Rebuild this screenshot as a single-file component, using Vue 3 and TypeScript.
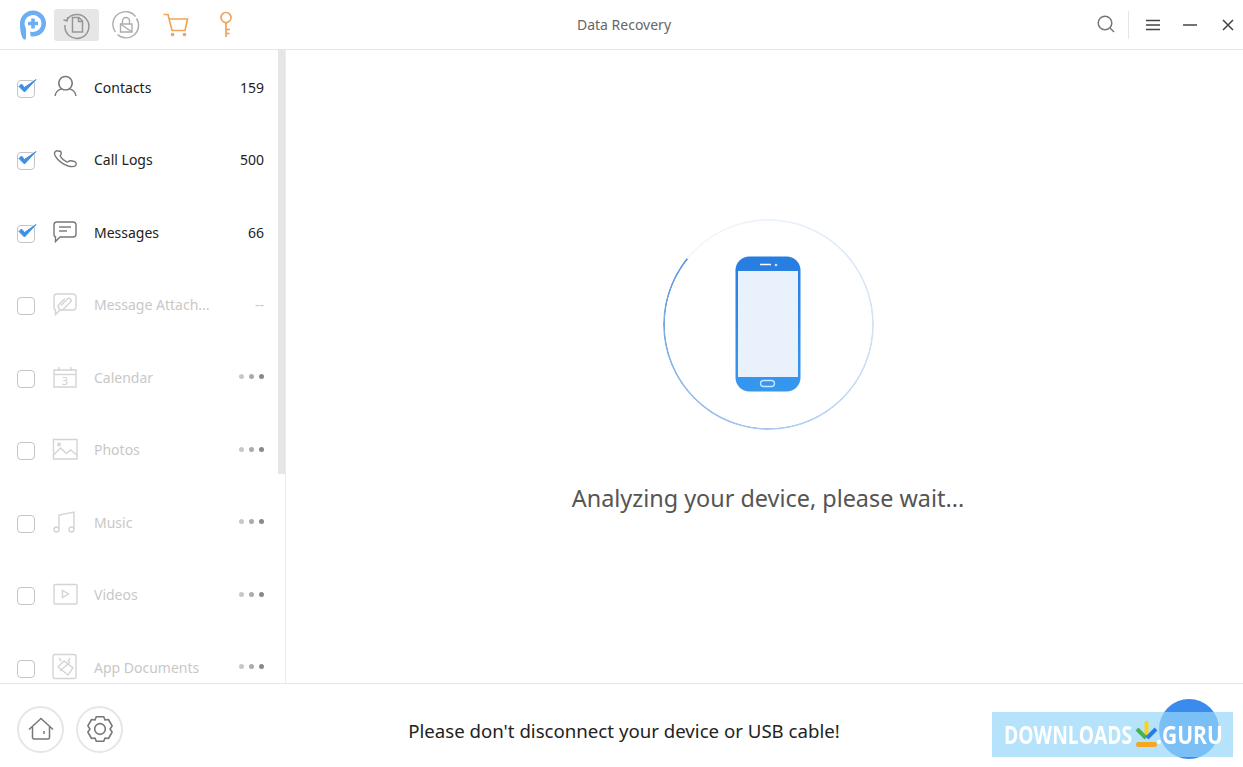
<script setup lang="ts">
interface Row {
  label: string
  count?: string
  checked: boolean
  busy?: boolean
  paths: string[]
  glyph?: string
}

const rows: Row[] = [
  {
    label: 'Contacts',
    count: '159',
    checked: true,
    paths: ['M16.5 4.5a6.7 6.7 0 1 1-.01 0z', 'M6 24c.8-4.6 3.6-6.6 7.2-7.4', 'M27 24c-.8-4.6-3.6-6.6-7.2-7.4']
  },
  {
    label: 'Call Logs',
    count: '500',
    checked: true,
    paths: ['M9.5 7.2C7 6 5 8 5.6 10.4c.5 1.8 1.5 3.2 2.8 4.6 3 3.2 6.6 5.800 10.800 7 2.700.7 5.800 1 7.400-.6 1.200-1.300.6-3-1-3.700-1.800-.8-3.800-1.300-5.300-.7-1 .4-1.500 1.300-2.600.9-2.500-1-5-3.400-6.300-5.500-.5-.9.3-1.500.7-2.300.4-1 .2-1.900-.6-2.900z']
  },
  {
    label: 'Messages',
    count: '66',
    checked: true,
    paths: ['M8 5h16a3 3 0 0 1 3 3v9a3 3 0 0 1-3 3H11l-4.500 4.500V20A2.500 2.500 0 0 1 5 17.500V8a3 3 0 0 1 3-3z', 'M10 10h12', 'M10 14h8']
  },
  {
    label: 'Message Attach...',
    count: '--',
    checked: false,
    paths: ['M8 5h16a3 3 0 0 1 3 3v10a3 3 0 0 1-3 3H11l-4.500 4.500V21A2.500 2.500 0 0 1 5 18.500V8a3 3 0 0 1 3-3z', 'M12 16.500l6.500-6.500a2 2 0 0 1 3 3l-7 7a3.200 3.200 0 0 1-4.500-4.500l6-6']
  },
  {
    label: 'Calendar',
    checked: false,
    busy: true,
    glyph: '3',
    paths: ['M5 8h22v17H5z', 'M5 12.500h22', 'M10 5v4', 'M22 5v4']
  },
  {
    label: 'Photos',
    checked: false,
    busy: true,
    paths: ['M4.500 5.500h23.500v19.500H4.500z', 'M4.500 21l7-7 6 5.500 4-3.500 6.500 5', 'M9 9.500h2v2H9z']
  },
  {
    label: 'Music',
    checked: false,
    busy: true,
    paths: ['M10 22V8l15-3v17', 'M10 22.500a2.500 2.500 0 1 1-5 0a2.500 2.500 0 1 1 5 0z', 'M25 22.500a2.500 2.500 0 1 1-5 0a2.500 2.500 0 1 1 5 0z']
  },
  {
    label: 'Videos',
    checked: false,
    busy: true,
    paths: ['M6 5.500h21a1 1 0 0 1 1 1v17.500a1 1 0 0 1-1 1H6a1 1 0 0 1-1-1V6.500a1 1 0 0 1 1-1z', 'M13.500 11.500v7l6-3.500z']
  },
  {
    label: 'App Documents',
    checked: false,
    busy: true,
    paths: ['M6 2.500h19a2 2 0 0 1 2 2v20a2 2 0 0 1-2 2H6a2 2 0 0 1-2-2v-20a2 2 0 0 1 2-2z', 'M9 15l6-6 9 7-5 7z', 'M11 19l10-9', 'M12 9l-2-3', 'M19 10l2-4']
  }
]
</script>

<template>
  <div class="app">
    <header class="top">
      <div class="tabs">
        <svg class="logo" width="30" height="32" viewBox="0 0 30 32">
          <path fill="#6daef3" d="M2 14.500a13 13 0 1 1 13 13c-1 0-1.500-.1-2.300-.3l-.7-4.700c1 .4 2 .5 3 .5a8.500 8.500 0 1 0-7.500-4.500l.5 1v9.500c0 1.300-1 2-2.200 1.300C3.500 28.500 2 22.500 2 14.500z" />
          <path fill="#6daef3" d="M13.200 9.500h3.600v3.200H20v3.600h-3.200v3.200h-3.600v-3.200H10v-3.600h3.200z" />
        </svg>
        <div class="tab active">
          <svg width="32" height="32" viewBox="0 0 32 32" fill="none" stroke="#969696" stroke-width="1.500">
            <path d="M5.500 11.500A12 12 0 1 1 4 16" />
            <path d="M2.500 11l3.500.8.800-3.600" />
            <path d="M11.500 8.500h6.500l3.500 3.500v11h-10z" />
            <path d="M17.500 8.500v4h4" />
          </svg>
        </div>
        <div class="tab">
          <svg width="32" height="32" viewBox="0 0 32 32" fill="none" stroke="#adadad" stroke-width="1.400">
            <path d="M5.500 23A12.500 12.500 0 0 1 25.500 7.500" />
            <path d="M26.500 9.500A12.500 12.500 0 0 1 7.500 25.500" />
            <path d="M10.500 15h11.500v8H10.500z" />
            <path d="M12.500 15v-3a3.500 3.500 0 0 1 7 0v3" />
            <path d="M10.500 15l11.500 8" />
          </svg>
        </div>
        <div class="tab">
          <svg width="32" height="32" viewBox="0 0 32 32" fill="none" stroke="#f0a45c" stroke-width="1.700">
            <path d="M3.500 5.500h4.500l4 16h13l2.500-11.500H9" />
            <circle cx="12.500" cy="25.500" r="1" fill="#f0a45c" />
            <circle cx="24.500" cy="25.500" r="1" fill="#f0a45c" />
          </svg>
        </div>
        <div class="tab">
          <svg width="32" height="32" viewBox="0 0 32 32" fill="none" stroke="#f0a45c" stroke-width="1.700">
            <path d="M13 12.500A5 5 0 1 1 19 12.500" />
            <path d="M13 12.500l3 1.500 3-1.500" />
            <path d="M16 14V28" />
            <path d="M16 20.500h4" />
            <path d="M16 24.500h3.500" />
          </svg>
        </div>
      </div>
      <div class="title">Data Recovery</div>
      <div class="tools">
        <svg width="20" height="20" viewBox="0 0 20 20" fill="none" stroke="#777" stroke-width="1.500">
          <circle cx="9" cy="9" r="6.800" />
          <path d="M14 14l4 4" />
        </svg>
        <span class="sep"></span>
        <svg width="14" height="12" viewBox="0 0 14 12" stroke="#444" stroke-width="1.500">
          <path d="M0 1.500h14M0 6h14M0 10.500h14" />
        </svg>
        <svg width="14" height="12" viewBox="0 0 14 12" stroke="#444" stroke-width="1.500">
          <path d="M0 6h14" />
        </svg>
        <svg width="12" height="12" viewBox="0 0 12 12" stroke="#444" stroke-width="1.500">
          <path d="M1 1l10 10M11 1L1 11" />
        </svg>
      </div>
    </header>

    <div class="middle">
      <aside class="side">
        <div class="list">
          <div v-for="row in rows" :key="row.label" class="row" :class="{ off: !row.checked }">
            <span class="box">
              <svg v-if="row.checked" class="tick" width="24" height="20" viewBox="0 0 24 20" fill="none">
                <path d="M4 9.500l5.500 5.500L21 2.500l-11.500 8L6.500 7z" fill="#3f8fe6" stroke="#3f8fe6" stroke-width="1" stroke-linejoin="round" />
              </svg>
            </span>
            <svg class="ico" width="32" height="32" viewBox="0 0 32 32" fill="none">
              <path v-for="d in row.paths" :key="d" :d="d" />
              <text v-if="row.glyph" x="16" y="23" text-anchor="middle" class="glyph">{{ row.glyph }}</text>
            </svg>
            <span class="label">{{ row.label }}</span>
            <span v-if="row.busy" class="dots"><i></i><i></i><i></i></span>
            <span v-else class="count">{{ row.count }}</span>
          </div>
        </div>
        <div class="thumb"></div>
      </aside>

      <main class="main">
        <div class="ring">
          <div class="ring-line"></div>
          <svg class="phone" width="66" height="136" viewBox="0 0 66 136">
            <defs>
              <linearGradient id="body" x1="0" y1="0" x2="0" y2="1">
                <stop offset="0" stop-color="#277de0" />
                <stop offset="1" stop-color="#3598f0" />
              </linearGradient>
            </defs>
            <rect x="0.500" y="0.500" width="65" height="135" rx="14" fill="url(#body)" />
            <rect x="3" y="15" width="60" height="106" fill="#e9f2fc" />
            <path d="M25 8.500h11" stroke="#fff" stroke-width="1.500" />
            <circle cx="41" cy="9" r="1.300" fill="#cfe3f8" />
            <rect x="25.500" y="124.500" width="14" height="6" rx="3" fill="none" stroke="#cfe3f8" stroke-width="1.300" />
          </svg>
        </div>
        <p class="wait">Analyzing your device, please wait...</p>
      </main>
    </div>

    <footer class="foot">
      <div class="btns">
        <span class="round">
          <svg width="30" height="30" viewBox="0 0 30 30" fill="none" stroke="#777" stroke-width="1.500">
            <path d="M3 15.500L15 4.500l12 11" />
            <path d="M6.500 13v10.500a1.500 1.500 0 0 0 1.500 1.500h14a1.500 1.500 0 0 0 1.500-1.500V13" />
            <path d="M18 17v3" />
          </svg>
        </span>
        <span class="round">
          <svg width="32" height="32" viewBox="0 0 30 30" fill="none" stroke="#777" stroke-width="1.500" stroke-linejoin="round">
            <path d="M11.500 3.500h7l1.200 3 3.200-.4 3.500 6-2 2.900 2 2.900-3.500 6-3.200-.4-1.200 3h-7l-1.200-3-3.200.4-3.500-6 2-2.900-2-2.900 3.500-6 3.200.4z" />
            <circle cx="15" cy="15" r="5" />
          </svg>
        </span>
      </div>
      <div class="notice">Please don't disconnect your device or USB cable!</div>
      <div></div>
    </footer>

    <div class="fab"></div>
    <div class="mark">
      <span class="mark-text">DOWNLOADS</span>
      <svg width="26" height="30" viewBox="0 0 26 30">
        <rect x="3" y="22" width="21" height="5" rx="2.500" fill="#f5a623" />
        <path d="M13.500 1v16" stroke="#f7d417" stroke-width="4" />
        <path d="M4 9l9 9" stroke="#4caf50" stroke-width="4" />
        <path d="M23 9l-9 9" stroke="#2a7de1" stroke-width="4" />
      </svg>
      <span class="mark-text guru">.GURU</span>
    </div>
  </div>
</template>

<style scoped>
.app {
  position: relative;
  width: 1243px;
  height: 767px;
  overflow: hidden;
  background: #fff;
  display: flex;
  flex-direction: column;
  font-family: "Noto Sans", "Open Sans", sans-serif;
  color: #222;
}
.top {
  height: 50px;
  box-sizing: border-box;
  border-bottom: 1px solid #e6e6e6;
  display: grid;
  grid-template-columns: 1fr auto 1fr;
  align-items: center;
  padding-left: 5px;
}
.tabs {
  display: flex;
  align-items: center;
  padding-left: 13px;
}
.logo {
  margin-right: 6px;
}
.tab {
  width: 45px;
  height: 32px;
  margin-right: 4.700px;
  border-radius: 3px;
  display: flex;
  align-items: center;
  justify-content: center;
}
.tab.active {
  background: #e6e6e6;
}
.title {
  font-size: 14px;
  color: #666;
}
.tools {
  display: flex;
  align-items: center;
  justify-content: flex-end;
  padding-right: 9px;
}
.tools svg:nth-of-type(1) {
  margin-right: 12px;
  margin-top: -2px;
}
.tools svg:nth-of-type(2) {
  margin: 0 23px 0 17px;
}
.tools svg:nth-of-type(3) {
  margin-right: 25px;
}
.sep {
  width: 1px;
  height: 28px;
  background: #e4e4e4;
}
.middle {
  flex: 1;
  display: flex;
  min-height: 0;
}
.side {
  position: relative;
  width: 286px;
  flex: none;
  box-sizing: border-box;
  border-right: 1px solid #ececec;
  overflow: hidden;
}
.list {
  padding-top: 1.250px;
}
.thumb {
  position: absolute;
  top: 0;
  right: -1px;
  width: 8px;
  height: 424px;
  background: #e6e6e6;
}
.row {
  height: 72.500px;
  display: flex;
  align-items: center;
  padding: 0 21px 0 17px;
  box-sizing: border-box;
  width: 285px;
  font-size: 14px;
}
.box {
  position: relative;
  width: 18px;
  height: 18px;
  box-sizing: border-box;
  border: 1.500px solid #c4c4c4;
  border-radius: 4px;
  margin-top: 2px;
  flex: none;
}
.tick {
  position: absolute;
  left: -3px;
  top: -4px;
}
.ico {
  margin-left: 14px;
  flex: none;
  stroke: #777;
  stroke-width: 1.400;
}
.off .ico {
  stroke: #d4d4d4;
}
.glyph {
  font-size: 11px;
  fill: #d0d0d0;
  stroke: none;
}
.label {
  margin-left: 13px;
  flex: 1;
  white-space: nowrap;
  margin-top: -1px;
}
.count {
  margin-top: -1px;
}
.off .label,
.off .count {
  color: #c8c8c8;
}
.dots {
  display: flex;
  gap: 5px;
  margin-top: -2px;
}
.dots i {
  width: 5px;
  height: 5px;
  border-radius: 50%;
  background: #c8c8c8;
}
.dots i:nth-child(2) {
  background: #aaa;
}
.dots i:nth-child(3) {
  background: #888;
}
.main {
  flex: 1;
  display: flex;
  flex-direction: column;
  align-items: center;
  padding-top: 169px;
  padding-left: 7px;
}
.ring {
  position: relative;
  width: 211px;
  height: 211px;
  display: flex;
  align-items: center;
  justify-content: center;
}
.phone {
  margin: -2px 0 0 -1px;
}
.ring-line {
  position: absolute;
  inset: 0;
  border-radius: 50%;
  background: conic-gradient(from 309deg, #f5f8fb 0%, #eaf1fa 18%, #c8dcf6 48%, #93bbec 78%, #5c98e2 100%);
  -webkit-mask: radial-gradient(closest-side, transparent calc(100% - 2.200px), #000 calc(100% - 1.600px));
  mask: radial-gradient(closest-side, transparent calc(100% - 2.200px), #000 calc(100% - 1.600px));
}
.wait {
  margin: 51px 0 0;
  font-size: 23.400px;
  line-height: 34px;
  color: #555;
}
.foot {
  height: 84px;
  box-sizing: border-box;
  border-top: 1px solid #e6e6e6;
  display: grid;
  grid-template-columns: 1fr auto 1fr;
  align-items: center;
  padding: 7px 0 0 5px;
}
.btns {
  display: flex;
  gap: 12px;
  padding-left: 12px;
}
.round {
  width: 47px;
  height: 47px;
  box-sizing: border-box;
  border: 2px solid #e6e6e6;
  border-radius: 50%;
  display: flex;
  align-items: center;
  justify-content: center;
}
.notice {
  font-size: 18.650px;
  color: #222;
  margin-top: 2px;
}
.fab {
  position: absolute;
  left: 1159px;
  top: 699px;
  width: 60px;
  height: 60px;
  border-radius: 50%;
  background: #3b8bef;
}
.mark {
  position: absolute;
  left: 992px;
  top: 712px;
  width: 241px;
  height: 45px;
  background: rgba(150, 215, 250, 0.7);
  display: flex;
  align-items: center;
  padding-left: 12px;
  box-sizing: border-box;
}
.mark-text {
  font-family: "Open Sans", "Noto Sans", sans-serif;
  font-size: 25px;
  font-weight: 700;
  color: #fff;
  transform: scaleX(0.77);
  transform-origin: left center;
  display: inline-block;
  width: 130px;
  margin-top: -2px;
}
.mark svg {
  flex: none;
  margin-left: -1px;
}
.guru {
  width: 80px;
  margin-left: -3px;
  transform: scaleX(0.84);
}
</style>
